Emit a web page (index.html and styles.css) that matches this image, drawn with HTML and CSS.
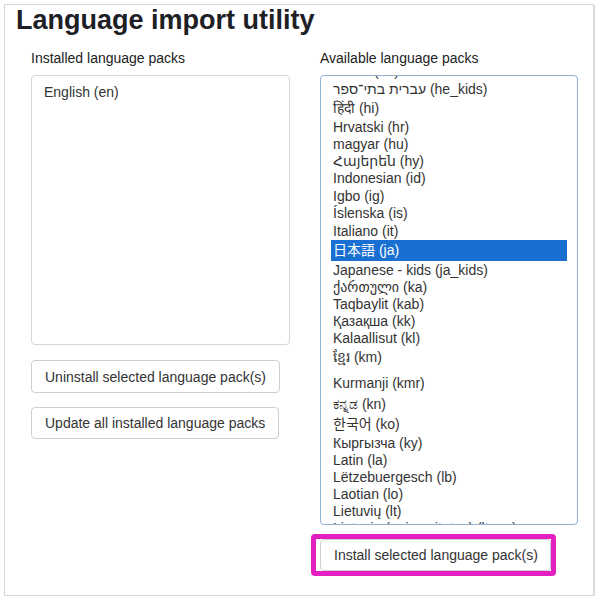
FILE: index.html
```html
<!DOCTYPE html>
<html lang="en">
<head>
    <meta charset="UTF-8">
    <title>Language import utility</title>
    <link rel="stylesheet" href="styles.css">
</head>
<body>
    <div class="card">
        <h1>Language import utility</h1>

        <div class="columns">
            <div class="col col-installed">
                <div class="col-label">Installed language packs</div>
                <div class="listbox listbox-installed">
                    <div class="opt">English (en)</div>
                </div>
                <button class="btn">Uninstall selected language pack(s)</button>
                <button class="btn">Update all installed language packs</button>
            </div>

            <div class="col col-available">
                <div class="col-label">Available language packs</div>
                <div class="listbox listbox-available">
                    <div class="opt-list">
                        <div class="opt">עברית (he)</div>
                        <div class="opt h18">עברית בתי־ספר (he_kids)</div>
                        <div class="opt h20">हिंदी (hi)</div>
                        <div class="opt h18">Hrvatski (hr)</div>
                        <div class="opt">magyar (hu)</div>
                        <div class="opt">Հայերեն (hy)</div>
                        <div class="opt">Indonesian (id)</div>
                        <div class="opt h18">Igbo (ig)</div>
                        <div class="opt">Íslenska (is)</div>
                        <div class="opt h18">Italiano (it)</div>
                        <div class="opt h21 selected">日本語 (ja)</div>
                        <div class="opt h18">Japanese - kids (ja_kids)</div>
                        <div class="opt">ქართული (ka)</div>
                        <div class="opt">Taqbaylit (kab)</div>
                        <div class="opt">Қазақша (kk)</div>
                        <div class="opt">Kalaallisut (kl)</div>
                        <div class="opt opt-tall">ខ្មែរ (km)</div>
                        <div class="opt h19">Kurmanji (kmr)</div>
                        <div class="opt h22">ಕನ್ನಡ (kn)</div>
                        <div class="opt h19">한국어 (ko)</div>
                        <div class="opt h18">Кыргызча (ky)</div>
                        <div class="opt">Latin (la)</div>
                        <div class="opt">Lëtzebuergesch (lb)</div>
                        <div class="opt">Laotian (lo)</div>
                        <div class="opt">Lietuvių (lt)</div>
                        <div class="opt">Lietuvių (universitetas) (lt_uu)</div>
                    </div>
                </div>
                <span class="highlight">
                    <button class="btn btn-install">Install selected language pack(s)</button>
                </span>
            </div>
        </div>
    </div>
</body>
</html>
```

FILE: styles.css
```css
body {
    margin: 0;
    background: #fff;
    font-family: "Liberation Sans", Arial, "Noto Sans CJK JP", "DejaVu Sans", sans-serif;
    color: #333;
}
.card {
    margin: 4px 4px 0 4px;
    border: 1px solid #d8d8d8;
    box-shadow: 1px 1px 1px rgba(0,0,0,0.12);
    padding: 0 0 19px 0;
}
h1 {
    margin: 0;
    padding-left: 11px;
    font-size: 27px;
    line-height: 30px;
    font-weight: bold;
    color: #1d2125;
}
.columns {
    display: flex;
    gap: 30px;
    margin-top: 15px;
    padding-left: 26px;
}
.col {
    display: flex;
    flex-direction: column;
    align-items: flex-start;
}
.col-installed {
    width: 259px;
}
.col-available {
    width: 258px;
}
.col-label {
    font-size: 14px;
    line-height: 17px;
    color: #222;
    margin-bottom: 8px;
}
.listbox {
    box-sizing: border-box;
    width: 100%;
    border: 1px solid #d6d6d6;
    border-radius: 4px;
    background: #fff;
    overflow: hidden;
    font-size: 14px;
}
.listbox-installed {
    height: 270px;
    padding: 8px 12px;
}
.listbox-available {
    height: 450px;
    border-color: #8fb2d6;
    padding: 0 10px;
}
.opt-list {
    margin-top: -13px;
}
.opt {
    height: 17px;
    line-height: 17px;
    padding-left: 2px;
    white-space: nowrap;
    color: #333;
}
.listbox-installed .opt {
    padding-left: 0;
}
.opt.h18 { height: 18px; line-height: 18px; }
.opt.h19 { height: 19px; line-height: 19px; }
.opt.h20 { height: 20px; line-height: 20px; }
.opt.h21 { height: 21px; line-height: 21px; }
.opt.h22 { height: 22px; line-height: 22px; }
.opt-tall {
    height: 20px;
    line-height: 20px;
    padding-bottom: 7px;
}
.opt.selected {
    background: #1a6fd2;
    color: #fff;
}
.btn {
    box-sizing: border-box;
    height: 33px;
    padding: 0 13px;
    border: 1px solid #cfcfcf;
    border-radius: 4px;
    background: #fff;
    font-family: inherit;
    font-size: 14px;
    color: #333;
    white-space: nowrap;
    margin-top: 15px;
}
.btn + .btn {
    margin-top: 14px;
    height: 32px;
}
.highlight {
    display: inline-block;
    margin: 9px 0 0 -9px;
    padding-left: 4px;
    border: 5px solid #e21fc0;
    border-radius: 4px;
}
.btn-install {
    display: block;
    margin: 0;
    width: 231px;
    height: 32px;
    text-align: left;
    padding: 0 0 0 13px;
}
```
